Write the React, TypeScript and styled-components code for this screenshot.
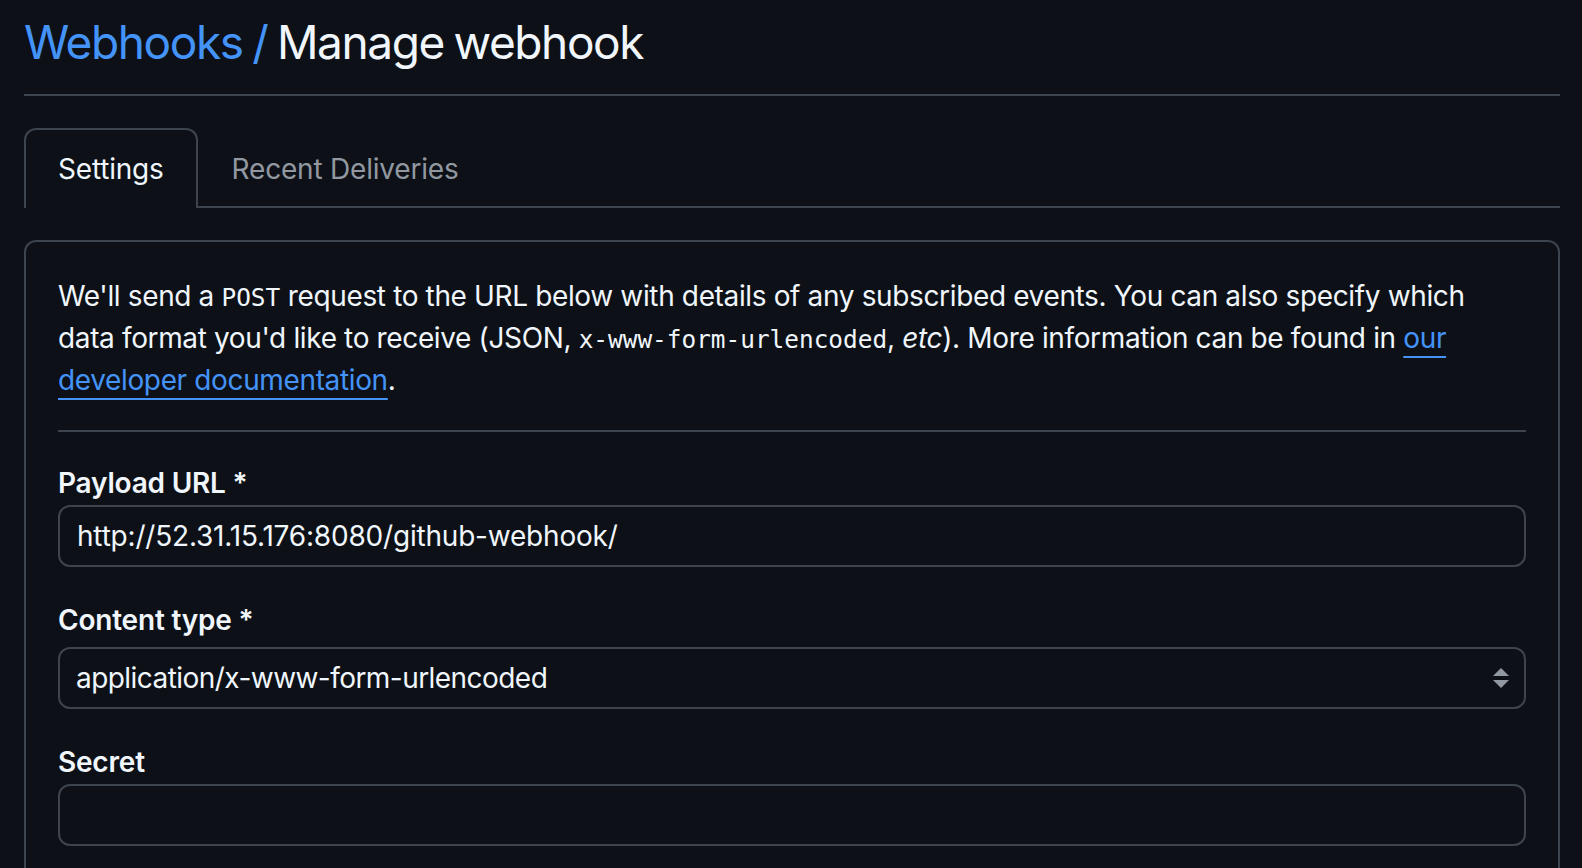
import React from "react";
import styled, { createGlobalStyle } from "styled-components";

const GlobalStyle = createGlobalStyle`
  html, body {
    margin: 0;
    padding: 0;
    background: #0d1117;
  }
  body {
    font-family: Inter, "Noto Sans", "Liberation Sans", sans-serif;
    color: #f0f6fc;
    -webkit-font-smoothing: antialiased;
  }
  * { box-sizing: border-box; }
`;

const Page = styled.div`
  padding: 6px 22px 0 24px;
  background: #0d1117;
  min-height: 868px;
`;

const Subhead = styled.div`
  padding-bottom: 16px;
  margin-bottom: 32px;
  border-bottom: 2px solid #3d444d;
`;

const Heading = styled.h2`
  margin: 0;
  font-size: 46px;
  line-height: 72px;
  font-weight: 400;
  letter-spacing: -1.4px;
  word-spacing: -2px;
  color: #f0f6fc;
`;

const Crumb = styled.a`
  color: #4493f8;
  text-decoration: none;
`;

const TabNav = styled.nav`
  display: flex;
  border-bottom: 2px solid #3d444d;
  margin-bottom: 32px;
`;

const Tab = styled.a<{ $selected?: boolean }>`
  display: block;
  padding: 17px 32px ${(p) => (p.$selected ? "17px" : "15px")};
  font-size: 28px;
  line-height: 44px;
  border: 2px solid ${(p) => (p.$selected ? "#3d444d" : "transparent")};
  border-bottom: 0;
  border-radius: 12px 12px 0 0;
  margin-bottom: -2px;
  background: ${(p) => (p.$selected ? "#0d1117" : "transparent")};
  color: ${(p) => (p.$selected ? "#f0f6fc" : "#9198a1")};
  text-decoration: none;
  letter-spacing: -0.2px;
`;

const Box = styled.div`
  border: 2px solid #3d444d;
  border-radius: 12px;
  padding: 33px 32px 32px;
`;

const Intro = styled.p`
  margin: 0;
  font-size: 28px;
  line-height: 42px;
  letter-spacing: -0.36px;
`;

const Code = styled.code`
  font-family: "DejaVu Sans Mono", "Liberation Mono", monospace;
  font-size: 24.4px;
  line-height: 1;
  letter-spacing: 0;
`;

const Emph = styled.em`
  line-height: 1;
`;

const DocLink = styled.a`
  color: #4493f8;
  text-decoration: underline;
  text-decoration-thickness: 2px;
  text-underline-offset: 8px;
`;

const Rule = styled.hr`
  border: 0;
  height: 2px;
  background: #3d444d;
  margin: 29px 0 30px;
`;

const Field = styled.div`
  display: flex;
  flex-direction: column;
  margin-bottom: 32px;
`;

const Label = styled.label`
  display: block;
  font-size: 28px;
  line-height: 42px;
  font-weight: 600;
  letter-spacing: -0.2px;
`;

const Input = styled.input`
  display: block;
  width: 100%;
  height: 62px;
  margin-top: 1px;
  padding: 0 17px;
  font-family: inherit;
  font-size: 28px;
  letter-spacing: -0.2px;
  color: #f0f6fc;
  background: #0d1117;
  border: 2px solid #3d444d;
  border-radius: 12px;
  outline: none;
`;

const SelectWrap = styled.div`
  position: relative;
  margin-top: 6px;
`;

const Select = styled.select`
  display: block;
  width: 100%;
  height: 62px;
  padding: 0 60px 0 16px;
  font-family: inherit;
  font-size: 28px;
  letter-spacing: -0.55px;
  color: #f0f6fc;
  background: #0d1117;
  border: 2px solid #3d444d;
  border-radius: 12px;
  outline: none;
  appearance: none;
  -webkit-appearance: none;
`;

const SelectIcon = styled.svg`
  position: absolute;
  right: 17px;
  top: 21px;
  width: 16px;
  height: 20px;
  pointer-events: none;
`;

export default function App() {
  return (
    <>
      <GlobalStyle />
      <Page>
        <Subhead>
          <Heading>
            <Crumb href="#">Webhooks /</Crumb> Manage webhook
          </Heading>
        </Subhead>
        <TabNav>
          <Tab href="#" $selected>
            Settings
          </Tab>
          <Tab href="#">Recent Deliveries</Tab>
        </TabNav>
        <Box>
          <Intro>
            We'll send a <Code>POST</Code> request to the URL below with details of any
            subscribed events. You can also specify which data format you'd like to receive
            (JSON, <Code>x-www-form-urlencoded</Code>, <Emph>etc</Emph>). More information can be
            found in <DocLink href="#">our developer documentation</DocLink>.
          </Intro>
          <Rule />
          <Field>
            <Label htmlFor="payload">Payload URL *</Label>
            <Input
              id="payload"
              type="text"
              defaultValue="http://52.31.15.176:8080/github-webhook/"
            />
          </Field>
          <Field>
            <Label htmlFor="ctype">Content type *</Label>
            <SelectWrap>
              <Select id="ctype" defaultValue="form">
                <option value="form">application/x-www-form-urlencoded</option>
                <option value="json">application/json</option>
              </Select>
              <SelectIcon viewBox="0 0 16 20" aria-hidden="true">
                <path d="M8 0 L16 8 L0 8 Z" fill="#9198a1" />
                <path d="M0 12 L16 12 L8 20 Z" fill="#9198a1" />
              </SelectIcon>
            </SelectWrap>
          </Field>
          <Field>
            <Label htmlFor="secret">Secret</Label>
            <Input id="secret" type="text" defaultValue="" />
          </Field>
        </Box>
      </Page>
    </>
  );
}
